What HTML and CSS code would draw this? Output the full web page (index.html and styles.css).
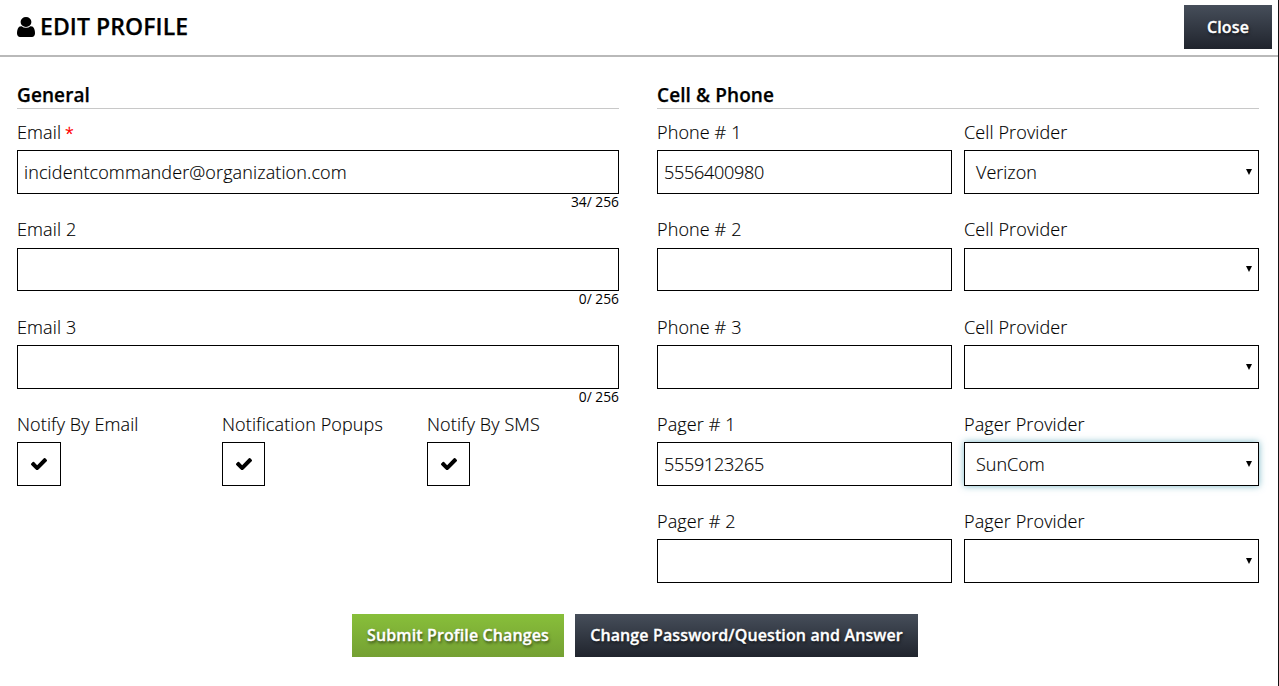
FILE: index.html
```html
<!DOCTYPE html>
<html lang="en">
<head>
<meta charset="utf-8">
<title>Edit Profile</title>
<link rel="stylesheet" href="styles.css">
</head>
<body>
<svg class="defs" aria-hidden="true">
  <symbol id="check" viewBox="121 343 1550 1180"><path d="M1671 566q0 40-28 68l-724 724-136 136q-28 28-68 28t-68-28l-136-136-362-362q-28-28-28-68t28-68l136-136q28-28 68-28t68 28l294 295 656-657q28-28 68-28t68 28l136 136q28 28 28 68z"/></symbol>
  <symbol id="arrow" viewBox="0 0 6 6"><path d="M0 0H6L3 6Z"/></symbol>
</svg>
<div class="page">
  <header class="header">
    <h1 class="title">
      <svg class="user" viewBox="256 128 1280 1536" preserveAspectRatio="none"><path d="M1536 1399q0 109-62.5 187t-150.5 78h-854q-88 0-150.5-78t-62.5-187q0-85 8.5-160.5t31.5-152 58.5-131 94-89 134.5-34.5q131 128 313 128t313-128q76 0 134.5 34.5t94 89 58.5 131 31.5 152 8.5 160.5zm-256-887q0 159-112.5 271.5t-271.5 112.5-271.5-112.5-112.5-271.5 112.5-271.5 271.5-112.5 271.5 112.5 112.5 271.5z"/></svg>
      <span class="title-text">EDIT PROFILE</span>
    </h1>
    <button class="btn btn-dark btn-close">Close</button>
  </header>
  <main class="columns">
    <section class="column">
      <h2 class="heading"><span>General</span></h2>
      <div class="rows">
        <div class="field"><div class="label">Email <span class="required">*</span></div><div class="box">incidentcommander@organization.com</div><div class="counter">34/ 256</div></div>
        <div class="field"><div class="label">Email 2</div><div class="box"></div><div class="counter">0/ 256</div></div>
        <div class="field"><div class="label">Email 3</div><div class="box"></div><div class="counter">0/ 256</div></div>
        <div class="checks">
          <div class="field"><div class="label">Notify By Email</div><div class="box checkbox"><svg class="check"><use href="#check"/></svg></div></div>
          <div class="field"><div class="label">Notification Popups</div><div class="box checkbox"><svg class="check"><use href="#check"/></svg></div></div>
          <div class="field"><div class="label">Notify By SMS</div><div class="box checkbox"><svg class="check"><use href="#check"/></svg></div></div>
        </div>
      </div>
    </section>
    <section class="column">
      <h2 class="heading"><span>Cell &amp; Phone</span></h2>
      <div class="rows pairs">
        <div class="field"><div class="label">Phone # 1</div><div class="box numeric">5556400980</div></div>
        <div class="field"><div class="label">Cell Provider</div><div class="box select">Verizon<svg class="arrow"><use href="#arrow"/></svg></div></div>
        <div class="field"><div class="label">Phone # 2</div><div class="box"></div></div>
        <div class="field"><div class="label">Cell Provider</div><div class="box select"><svg class="arrow"><use href="#arrow"/></svg></div></div>
        <div class="field"><div class="label">Phone # 3</div><div class="box"></div></div>
        <div class="field"><div class="label">Cell Provider</div><div class="box select"><svg class="arrow"><use href="#arrow"/></svg></div></div>
        <div class="field"><div class="label">Pager # 1</div><div class="box numeric">5559123265</div></div>
        <div class="field"><div class="label">Pager Provider</div><div class="box select focused">SunCom<svg class="arrow"><use href="#arrow"/></svg></div></div>
        <div class="field"><div class="label">Pager # 2</div><div class="box"></div></div>
        <div class="field"><div class="label">Pager Provider</div><div class="box select"><svg class="arrow"><use href="#arrow"/></svg></div></div>
      </div>
    </section>
  </main>
  <footer class="actions">
    <button class="btn btn-green">Submit Profile Changes</button>
    <button class="btn btn-dark btn-password">Change Password/Question and Answer</button>
  </footer>
</div>
</body>
</html>
```
FILE: styles.css
```css
* { box-sizing: border-box; }
body {
  margin: 0;
  background: #fff;
  color: #000;
  font-family: "Open Sans", sans-serif;
  overflow: hidden;
}
.defs { display: none; }
.page {
  height: 686px;
  border-right: 1px solid #111;
  display: flex;
  flex-direction: column;
}
.header {
  height: 57px;
  flex: none;
  display: flex;
  justify-content: space-between;
  align-items: flex-start;
  padding: 5px 6px 0 17px;
  border-bottom: 2px solid #b9b9b9;
}
.title {
  margin: 0;
  display: flex;
  align-items: center;
  gap: 5px;
  height: 43px;
  font-size: 23px;
  line-height: 31px;
  font-weight: 600;
  letter-spacing: .08px;
  white-space: nowrap;
  -webkit-text-stroke: .25px #000;
}
.title-text { margin-top: -1px; }
.user { width: 18px; height: 20px; stroke: none; margin-top: 1px; }
.btn {
  border: 0;
  padding: 0;
  height: 43px;
  font: 600 16px/43px "Open Sans", sans-serif;
  letter-spacing: .12px;
  color: #fff;
  -webkit-text-stroke: .3px #fff;
  text-shadow: 1px 2px 3px rgba(0, 0, 0, .6);
  white-space: nowrap;
}
.btn-dark { background: linear-gradient(#464e5a, #20242d); }
.btn-green { width: 212px; background: linear-gradient(#88bf3a, #74a033); }
.btn-close { width: 88px; height: 44px; }
.btn-password { width: 343px; }
.columns {
  flex: none;
  display: grid;
  grid-template-columns: 602px 602px;
  column-gap: 38px;
  padding: 27px 0 0 17px;
}
.heading {
  margin: 0;
  height: 25px;
  border-bottom: 1px solid #c8c8c8;
  font-size: 19px;
  line-height: 22px;
  font-weight: 600;
  letter-spacing: .1px;
  -webkit-text-stroke: .25px #000;
}
.rows {
  display: grid;
  grid-auto-rows: 97.25px;
  padding-top: 10px;
}
.pairs { grid-template-columns: 295px 295px; column-gap: 12px; }
.checks { display: grid; grid-template-columns: 205px 205px 192px; }
.label {
  height: 31.45px;
  font-size: 18px;
  line-height: 27px;
  font-weight: 300;
  letter-spacing: .12px;
  white-space: nowrap;
  -webkit-text-stroke: .15px #000;
}
.required { color: #f00; font-size: 16px; margin-left: -1px; -webkit-text-stroke: .4px #f00; }
.box {
  height: 43.6px;
  border: 1px solid #000;
  padding: 0 6px;
  display: flex;
  align-items: center;
  font-size: 18px;
  line-height: 24px;
  font-weight: 300;
  letter-spacing: .12px;
  -webkit-text-stroke: .15px #000;
}
.numeric { letter-spacing: -.28px; }
.select { justify-content: space-between; padding: 0 6px 0 11px; letter-spacing: 0; }
.focused { box-shadow: 0 0 7px rgba(80, 160, 180, .75); }
.arrow { width: 6px; height: 6px; margin-left: auto; stroke: none; }
.checkbox { width: 43.6px; padding: 0; justify-content: center; }
.field + .field > .checkbox { width: 43px; }
.check { width: 16px; height: 12.5px; }
.counter {
  font-size: 13.8px;
  line-height: 16px;
  text-align: right;
}
.actions {
  display: flex;
  gap: 11px;
  padding: 8.75px 0 0 352px;
}
```
